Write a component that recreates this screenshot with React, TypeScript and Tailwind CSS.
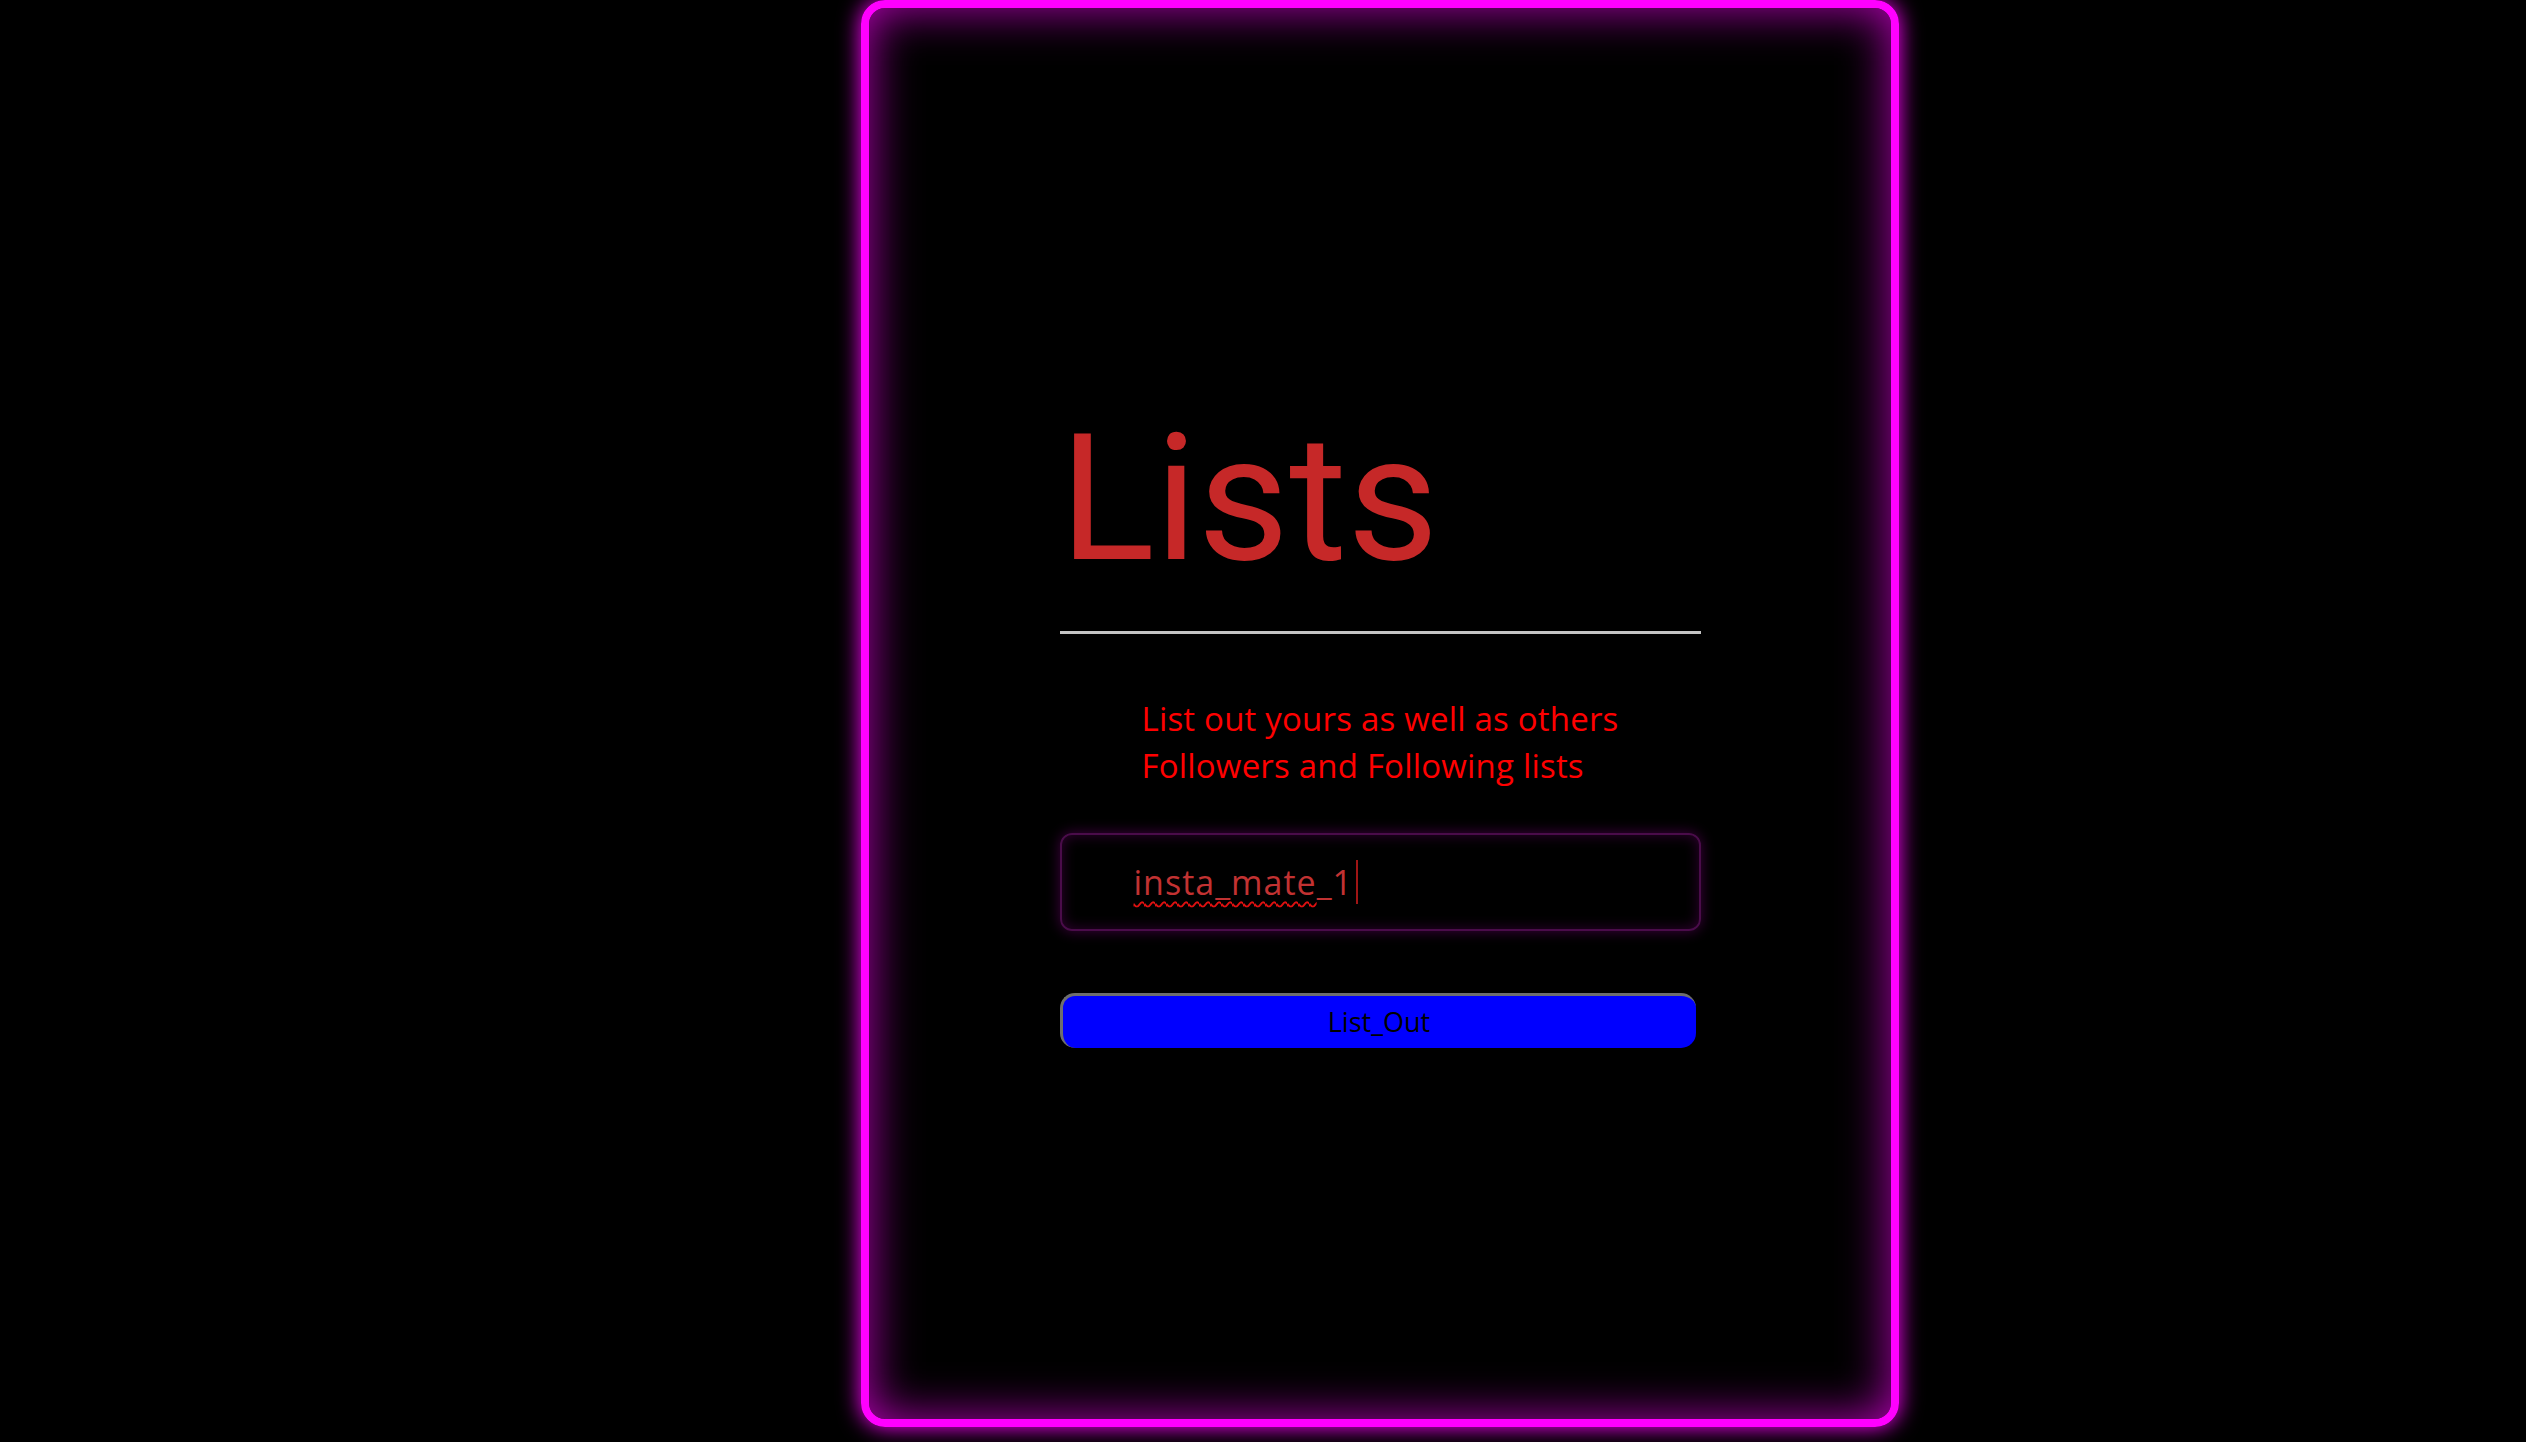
export default function App() {
  return (
    <main className="min-h-[1442px] w-full bg-black">
      <div className="ml-[861px] flex h-[1427px] w-[1038px] flex-col items-center rounded-[24px] border-8 border-[#ff00ff] pt-[402px] shadow-[0_0_22px_#ff00ff,inset_0_0_48px_rgba(255,0,255,0.7)]">
        <div className="flex w-[641px] flex-col">
          <h1 className="font-['Roboto',sans-serif] text-[177px] leading-none font-normal text-[#c62828]">
            Lists
          </h1>

          <div className="mt-[44px] h-[3px] w-full bg-[#c4c4c4]" />

          <p className="mx-auto mt-[61px] w-fit font-['Open_Sans',sans-serif] text-[33px] leading-[47px] tracking-[0.2px] text-[#ff0000]">
            List out yours as well as others
            <br />
            Followers and Following lists
          </p>

          <div className="mt-[44px] flex h-[98px] w-full items-center rounded-[12px] border-2 border-[#4a0c4a] pl-[72px] shadow-[0_0_14px_rgba(140,0,140,0.45),inset_0_0_14px_rgba(140,0,140,0.35)]">
            <span className="font-['Open_Sans',sans-serif] text-[34px] tracking-[1px] text-[#c23232]">
              <span className="underline decoration-[#e01010] decoration-wavy decoration-[2px] underline-offset-[6px]">
                insta_mate
              </span>
              _1
            </span>
            <span className="ml-[3px] inline-block h-[44px] w-[2px] bg-[#a01515]" />
          </div>

          <button className="mt-[62px] h-[55px] w-[636px] rounded-[15px] border-t-[3px] border-l-[3px] border-[#6e6e6e] bg-[#0000ff] font-['Open_Sans',sans-serif] text-[27px] text-black">
            List_Out
          </button>
        </div>
      </div>
    </main>
  )
}
